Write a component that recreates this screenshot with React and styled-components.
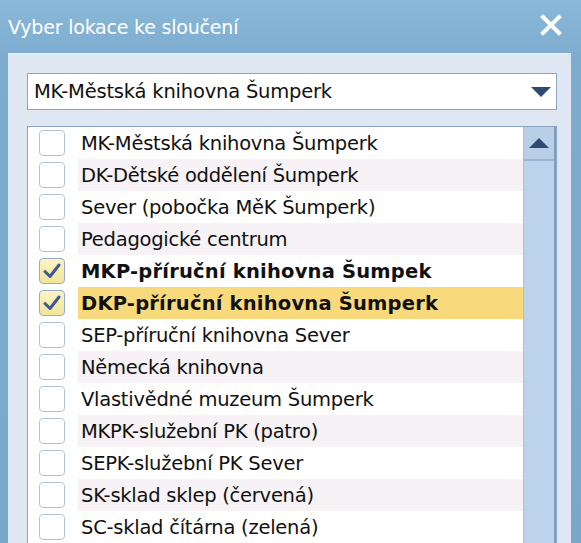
import React from 'react';
import styled, { createGlobalStyle } from 'styled-components';

const GlobalStyle = createGlobalStyle`
  html, body {
    margin: 0;
    padding: 0;
    background: #7eaccf;
  }
`;

const locations = [
  { name: 'MK-Městská knihovna Šumperk' },
  { name: 'DK-Dětské oddělení Šumperk' },
  { name: 'Sever (pobočka MěK Šumperk)' },
  { name: 'Pedagogické centrum' },
  { name: 'MKP-příruční knihovna Šumpek', checked: true },
  { name: 'DKP-příruční knihovna Šumperk', checked: true, selected: true },
  { name: 'SEP-příruční knihovna Sever' },
  { name: 'Německá knihovna' },
  { name: 'Vlastivědné muzeum Šumperk' },
  { name: 'MKPK-služební PK (patro)' },
  { name: 'SEPK-služební PK Sever' },
  { name: 'SK-sklad sklep (červená)' },
  { name: 'SC-sklad čítárna (zelená)' },
];

const Window = styled.div`
  width: 581px;
  height: 543px;
  overflow: hidden;
  display: flex;
  flex-direction: column;
  background: linear-gradient(#8ab8d8, #7eaccf 60px, #7aa8cb);
  font-family: "DejaVu Sans", sans-serif;
`;

const TitleBar = styled.div`
  height: 53px;
  flex: none;
  display: flex;
  align-items: center;
  justify-content: space-between;
  padding: 0 18px 0 8px;
  color: #fff;
  font-size: 19px;
  letter-spacing: -0.2px;
`;

const CloseButton = styled.svg`
  width: 24px;
  height: 24px;
  margin-top: -4px;
`;

const Panel = styled.div`
  flex: 1;
  margin: 0 10px 0 8px;
  padding: 19px 14px 0 19px;
  background: #dee7f2;
  border-top: 1px solid #eef3f9;
  display: flex;
  flex-direction: column;
  gap: 16px;
`;

const Combo = styled.div`
  height: 35px;
  display: flex;
  align-items: center;
  justify-content: space-between;
  padding: 0 5px 0 6px;
  background: #fff;
  border: 1px solid #8aa4c2;
  font-size: 19.5px;
  letter-spacing: -0.2px;
  color: #111;
`;

const Arrow = styled.svg`
  width: 20px;
  height: 10px;
`;

const List = styled.div`
  flex: 1;
  display: flex;
  background: #fff;
  border: 1px solid #8aa4c2;
  border-bottom: none;
`;

const Rows = styled.div`
  flex: 1;
  display: flex;
  flex-direction: column;
`;

const Row = styled.div`
  height: 32px;
  flex: none;
  display: grid;
  grid-template-columns: 50px 1fr;
  align-items: stretch;
`;

const CheckCell = styled.div`
  display: flex;
  align-items: center;
  padding-left: 11px;
`;

const Box = styled.div`
  width: 24px;
  height: 24px;
  border: 1px solid ${p => (p.$checked ? '#98aac4' : '#b2c3d4')};
  border-radius: 4px;
  background: ${p => (p.$checked ? 'linear-gradient(#fbf3c6, #f2e49a)' : '#fff')};
  display: flex;
  align-items: center;
  justify-content: center;
`;

const Label = styled.div`
  display: flex;
  align-items: center;
  padding-left: 3px;
  font-size: 19.5px;
  letter-spacing: ${p => (p.$bold ? '0.2px' : '-0.25px')};
  color: #111;
  font-weight: ${p => (p.$bold ? 700 : 400)};
  background: ${p => (p.$selected ? '#f8da7c' : p.$odd ? '#f6f2f6' : '#fff')};
`;

const ScrollBar = styled.div`
  width: 30px;
  flex: none;
  background: #bdd3e9;
  border-left: 1px solid #a8c0da;
  border-right: 2px solid #7f9fc3;
  display: flex;
  flex-direction: column;
`;

const ScrollButton = styled.div`
  height: 32px;
  display: flex;
  align-items: center;
  justify-content: center;
  border-bottom: 2px solid #9cb5d2;
  background: #b8cfe6;
`;

const Check = () => (
  <svg width="20" height="18" viewBox="0 0 20 18">
    <path d="M3 9.5 L8 14.5 L17 3" fill="none" stroke="#3b5b8f" strokeWidth="3" strokeLinecap="round" strokeLinejoin="round" />
  </svg>
);

export default function App() {
  return (
    <>
      <GlobalStyle />
      <Window>
        <TitleBar>
          <span>Vyber lokace ke sloučení</span>
          <CloseButton viewBox="0 0 24 24">
            <path d="M4 4 L20 20 M20 4 L4 20" stroke="#fff" strokeWidth="4" strokeLinecap="square" />
          </CloseButton>
        </TitleBar>
        <Panel>
          <Combo>
            <span>MK-Městská knihovna Šumperk</span>
            <Arrow viewBox="0 0 20 10">
              <path d="M0 0 H20 L10 10 Z" fill="#2e4c72" />
            </Arrow>
          </Combo>
          <List>
            <Rows>
              {locations.map((loc, i) => (
                <Row key={loc.name}>
                  <CheckCell>
                    <Box $checked={loc.checked}>{loc.checked && <Check />}</Box>
                  </CheckCell>
                  <Label $odd={i % 2 === 1} $bold={loc.checked} $selected={loc.selected}>
                    {loc.name}
                  </Label>
                </Row>
              ))}
            </Rows>
            <ScrollBar>
              <ScrollButton>
                <Arrow viewBox="0 0 20 10">
                  <path d="M0 10 H20 L10 0 Z" fill="#2e4c72" />
                </Arrow>
              </ScrollButton>
            </ScrollBar>
          </List>
        </Panel>
      </Window>
    </>
  );
}
